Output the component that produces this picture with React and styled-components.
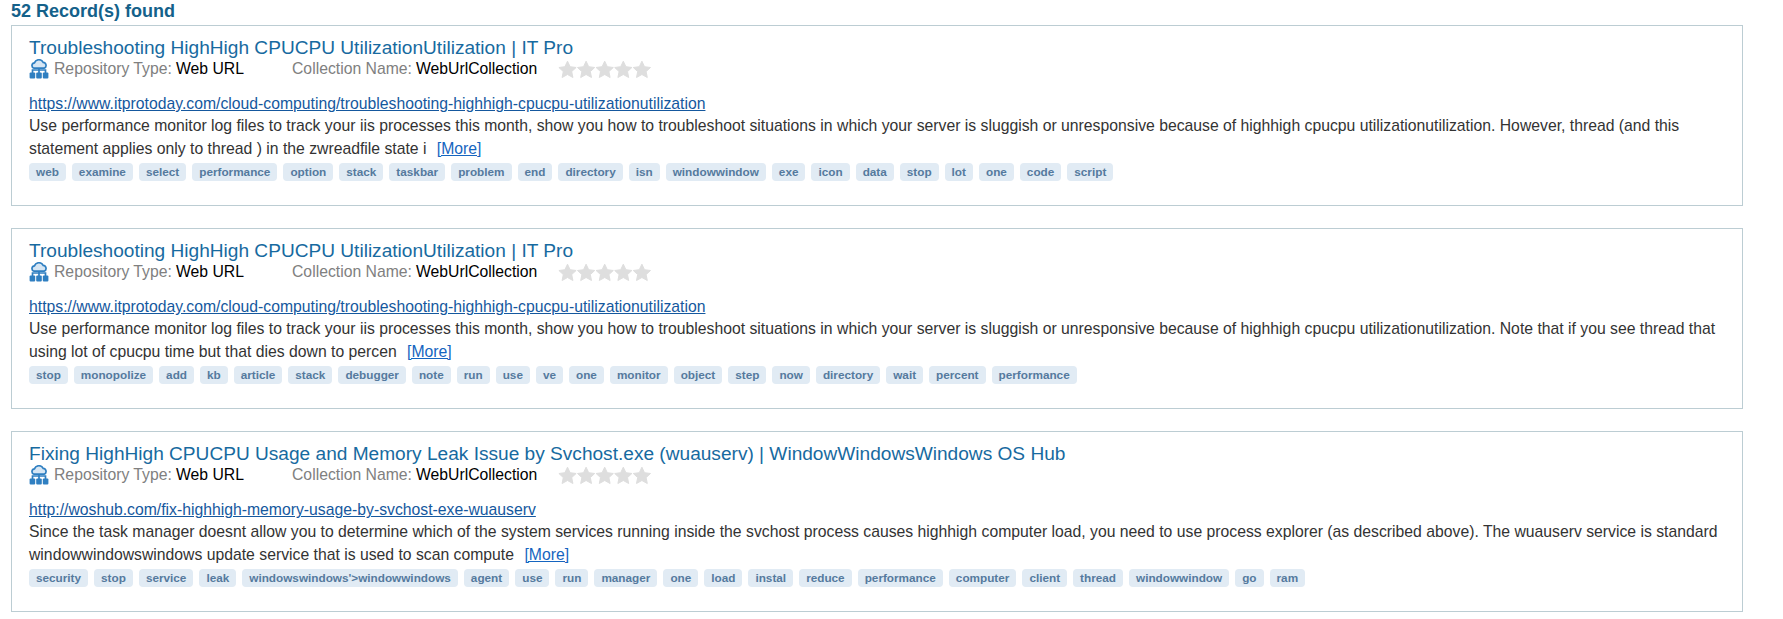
import React from 'react';
import styled, { createGlobalStyle } from 'styled-components';

const GlobalStyle = createGlobalStyle`
    html, body {
        margin: 0;
        padding: 0;
        background: #fff;
        font-family: "Liberation Sans", Arial, sans-serif;
    }
`;

const Page = styled.div`
    width: 1783px;
    height: 619px;
    overflow: hidden;
    box-sizing: border-box;
    padding: 2px 40px 0 11px;
`;

const Found = styled.div`
    font-size: 18px;
    font-weight: 700;
    line-height: 18px;
    color: #14618a;
    margin-bottom: 5px;
`;

const Card = styled.div`
    box-sizing: border-box;
    height: 180.5px;
    margin-bottom: 22.7px;
    padding: 10px 17px 0;
    border: 1px solid #bccdd3;
    background: #fff;
`;

const Title = styled.a`
    display: block;
    font-size: 19.1px;
    line-height: 24px;
    color: #176aa0;
`;

const Meta = styled.div`
    display: flex;
    align-items: center;
    height: 20px;
    margin-top: -1px;
    font-size: 15.75px;
    color: #000;
`;

const Label = styled.span`
    color: #808080;
    margin-right: 4px;
`;

const MetaItem = styled.span`
    display: inline-block;
    white-space: nowrap;
    width: ${props => props.width}px;
`;

const Icon = styled.svg`
    width: 20px;
    height: 20px;
    margin-right: 5px;
`;

const Stars = styled.svg`
    width: 94px;
    height: 20px;
`;

const Url = styled.a`
    display: block;
    margin-top: 13px;
    font-size: 15.75px;
    line-height: 23px;
    color: #15589e;
    text-decoration: underline;
`;

const Desc = styled.div`
    font-size: 15.75px;
    line-height: 22.5px;
    color: #333;
`;

const More = styled.a`
    color: #1565c0;
    text-decoration: underline;
    margin-left: 6px;
`;

const Tags = styled.div`
    display: flex;
    gap: 6px;
    margin-top: 3px;
`;

const Tag = styled.span`
    height: 18px;
    line-height: 17px;
    padding: 0 7px;
    font-size: 11.75px;
    font-weight: 700;
    color: #557a9e;
    background: #e1ebf4;
    border-radius: 4px;
`;

const CloudIcon = () => (
    <Icon viewBox="0 0 20 20">
        <path d="M5 9.2a2.7 2.7 0 0 1 .4-5.3A4.8 4.8 0 0 1 14.2 3.4a3 3 0 0 1 .9 5.8z" fill="#d6e6f4" stroke="#2f7fc1" strokeWidth="1.7" />
        <path d="M3.5 14v-3h13v3M10 9v5" fill="none" stroke="#2f7fc1" strokeWidth="1.7" />
        {[0.6, 7.2, 13.8].map(x => (
            <rect key={x} x={x} y="13.6" width="5.6" height="6" rx="1" fill="#2f7fc1" />
        ))}
    </Icon>
);

const starPath = 'M9.5 1.2l2.6 5.5 6 .8-4.4 4.1 1.2 5.9-5.4-3-5.4 3 1.2-5.9L.9 7.5l6-.8z';

const RatingStars = () => (
    <Stars viewBox="0 0 94 20">
        {[0, 1, 2, 3, 4].map(i => (
            <path key={i} d={starPath} transform={`translate(${i * 18.6} 1)`} fill="#dedede" stroke="#dedede" strokeWidth="1" strokeLinejoin="round" />
        ))}
    </Stars>
);

const records = [
    {
        title: 'Troubleshooting HighHigh CPUCPU UtilizationUtilization | IT Pro',
        url: 'https://www.itprotoday.com/cloud-computing/troubleshooting-highhigh-cpucpu-utilizationutilization',
        desc: 'Use performance monitor log files to track your iis processes this month, show you how to troubleshoot situations in which your server is sluggish or unresponsive because of highhigh cpucpu utilizationutilization. However, thread (and this statement applies only to thread ) in the zwreadfile state i ',
        tags: ['web', 'examine', 'select', 'performance', 'option', 'stack', 'taskbar', 'problem', 'end', 'directory', 'isn', 'windowwindow', 'exe', 'icon', 'data', 'stop', 'lot', 'one', 'code', 'script'],
    },
    {
        title: 'Troubleshooting HighHigh CPUCPU UtilizationUtilization | IT Pro',
        url: 'https://www.itprotoday.com/cloud-computing/troubleshooting-highhigh-cpucpu-utilizationutilization',
        desc: 'Use performance monitor log files to track your iis processes this month, show you how to troubleshoot situations in which your server is sluggish or unresponsive because of highhigh cpucpu utilizationutilization. Note that if you see thread that using lot of cpucpu time but that dies down to percen ',
        tags: ['stop', 'monopolize', 'add', 'kb', 'article', 'stack', 'debugger', 'note', 'run', 'use', 've', 'one', 'monitor', 'object', 'step', 'now', 'directory', 'wait', 'percent', 'performance'],
    },
    {
        title: 'Fixing HighHigh CPUCPU Usage and Memory Leak Issue by Svchost.exe (wuauserv) | WindowWindowsWindows OS Hub',
        url: 'http://woshub.com/fix-highhigh-memory-usage-by-svchost-exe-wuauserv',
        desc: 'Since the task manager doesnt allow you to determine which of the system services running inside the svchost process causes highhigh computer load, you need to use process explorer (as described above). The wuauserv service is standard windowwindowswindows update service that is used to scan compute ',
        tags: ['security', 'stop', 'service', 'leak', "windowswindows'>windowwindows", 'agent', 'use', 'run', 'manager', 'one', 'load', 'instal', 'reduce', 'performance', 'computer', 'client', 'thread', 'windowwindow', 'go', 'ram'],
    },
];

export default function App() {
    return (
        <Page>
            <GlobalStyle />
            <Found>52 Record(s) found</Found>
            {records.map((record, index) => (
                <Card key={index}>
                    <Title>{record.title}</Title>
                    <Meta>
                        <CloudIcon />
                        <MetaItem width={238}><Label>Repository Type:</Label>Web URL</MetaItem>
                        <MetaItem width={266}><Label>Collection Name:</Label>WebUrlCollection</MetaItem>
                        <RatingStars />
                    </Meta>
                    <Url>{record.url}</Url>
                    <Desc>{record.desc}<More>[More]</More></Desc>
                    <Tags>
                        {record.tags.map(tag => <Tag key={tag}>{tag}</Tag>)}
                    </Tags>
                </Card>
            ))}
        </Page>
    );
}
